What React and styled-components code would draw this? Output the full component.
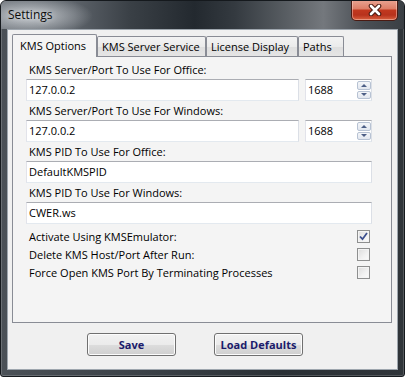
import React from 'react';
import styled, { createGlobalStyle } from 'styled-components';

const GlobalStyle = createGlobalStyle`
  html, body { margin: 0; padding: 0; background: #ffffff; }
  body { font-family: "Open Sans", "DejaVu Sans", sans-serif; }
`;

const Window = styled.div`
  box-sizing: border-box;
  width: 405px;
  height: 377px;
  display: flex;
  flex-direction: column;
  padding: 0 6px 6px;
  border: 1px solid #15191d;
  border-radius: 6px 6px 3px 3px;
  background: linear-gradient(90deg, #4b5157 0%, #393f45 40%, #2a3035 70%, #30353a 100%);
  box-shadow: inset 0 0 0 1px rgba(255, 255, 255, 0.18);
  overflow: hidden;
`;

const TitleBar = styled.div`
  display: flex;
  align-items: flex-start;
  justify-content: space-between;
  height: 28px;
  margin: 0 -6px;
  padding: 0 6px 0 7px;
  background:
    radial-gradient(ellipse 62px 20px at 30px 15px, rgba(225, 229, 233, 0.8), rgba(225, 229, 233, 0) 100%),
    linear-gradient(90deg, #6c7279 0%, #5d636a 18%, #3a4046 32%, #23292f 48%, #343a40 58%, #5c6166 72%, #74787d 80%, #4a4f55 90%, #3a3f44 100%);
`;

const Title = styled.span`
  font-size: 12px;
  line-height: 28px;
  color: #0d0d0d;
  text-shadow: 0 0 6px rgba(255, 255, 255, 0.6);
`;

const CloseButton = styled.div`
  box-sizing: border-box;
  width: 47px;
  height: 21px;
  margin-top: -1px;
  display: flex;
  align-items: center;
  justify-content: center;
  border: 1px solid #4a1a12;
  border-top: none;
  border-radius: 0 0 5px 5px;
  background: linear-gradient(180deg, #e9a493 0%, #dd7d66 45%, #c2381f 50%, #b8321c 75%, #d9603f 100%);
  box-shadow: inset 0 0 0 1px rgba(255, 220, 210, 0.45);
`;

const Client = styled.div`
  flex: 1;
  display: flex;
  flex-direction: column;
  padding: 4px 5px 0 4px;
  background: #f0f0f0;
  border: 1px solid #9ea6ae;
`;

const TabStrip = styled.div`
  display: flex;
  align-items: flex-end;
  height: 23px;
  margin-bottom: -1px;
  position: relative;
  z-index: 1;
`;

const Tab = styled.div`
  box-sizing: border-box;
  width: ${(p) => p.$w}px;
  height: ${(p) => (p.$active ? 23 : 20)}px;
  margin-bottom: ${(p) => (p.$active ? 0 : 1)}px;
  padding-left: ${(p) => (p.$active ? 7 : 4)}px;
  border: 1px solid #898c95;
  border-bottom: none;
  border-radius: 2px 2px 0 0;
  background: ${(p) => (p.$active ? '#f4f4f4' : 'linear-gradient(180deg, #f3f3f3 0%, #ebebeb 50%, #dedede 51%, #e5e5e5 100%)')};
  font-size: 11px;
  line-height: ${(p) => (p.$active ? 22 : 19)}px;
  color: #000;
  white-space: nowrap;
`;

const Panel = styled.div`
  flex: 1;
  display: flex;
  flex-direction: column;
  padding: 4px 19px 0 13px;
  background: #f4f4f4;
  border: 1px solid #898c95;
`;

const FieldLabel = styled.div`
  height: 18px;
  padding-left: 3px;
  font-size: 11px;
  line-height: 17px;
  color: #000;
`;

const FieldRow = styled.div`
  display: flex;
  gap: 6px;
  margin-bottom: 1px;
`;

const TextBox = styled.div`
  box-sizing: border-box;
  position: relative;
  width: ${(p) => (p.$w ? `${p.$w}px` : '100%')};
  height: 22px;
  padding-left: 2px;
  border: 1px solid;
  border-color: #abadb3 #dbdfe6 #e3e9ef #e2e3ea;
  background: #ffffff;
  font-size: 11px;
  line-height: 20px;
  color: #000;
`;

const Spinner = styled.div`
  position: absolute;
  top: 1px;
  right: 0;
  width: 14px;
  height: 18px;
  display: flex;
  flex-direction: column;
  gap: 1px;
`;

const SpinHalf = styled.div`
  flex: 1;
  display: flex;
  align-items: center;
  justify-content: center;
  border: 1px solid #b7c2d3;
  border-radius: 2px;
  background: linear-gradient(180deg, #f4f6f9 0%, #e2e7ef 100%);
`;

const Arrow = styled.div`
  width: 0;
  height: 0;
  border-left: 3px solid transparent;
  border-right: 3px solid transparent;
  ${(p) => (p.$up ? 'border-bottom: 3px solid #4d5f86;' : 'border-top: 3px solid #4d5f86;')}
`;

const CheckList = styled.div`
  display: flex;
  flex-direction: column;
  padding-top: 2px;
`;

const CheckRow = styled.div`
  display: flex;
  align-items: center;
  justify-content: space-between;
  height: 18px;
  padding: 0 2px 0 3px;
  font-size: 11px;
  color: #000;
`;

const Box = styled.div`
  box-sizing: border-box;
  width: 13px;
  height: 13px;
  display: flex;
  align-items: center;
  justify-content: center;
  border: 1px solid #8e8f8f;
  background: linear-gradient(135deg, #dcdcdc 0%, #f2f2f2 60%, #fbfbfb 100%);
  box-shadow: inset 0 0 0 1px #f4f4f4;
`;

const ButtonRow = styled.div`
  display: flex;
  gap: 38px;
  padding: 10px 0 13px 75px;
`;

const Button = styled.div`
  box-sizing: border-box;
  width: 89px;
  height: 23px;
  display: flex;
  align-items: center;
  justify-content: center;
  border: 1px solid #707070;
  border-radius: 3px;
  background: linear-gradient(180deg, #f2f2f2 0%, #ebebeb 50%, #dddddd 51%, #cfcfcf 100%);
  box-shadow: inset 0 0 0 1px #fcfcfc;
  font-size: 11px;
  font-weight: 700;
  color: #1b1b6b;
`;

function CloseGlyph() {
  return (
    <svg width="14" height="12" viewBox="0 0 14 12">
      <path d="M3 2 L11 10 M11 2 L3 10" stroke="#4a1b12" strokeWidth="4.6" strokeLinecap="round" />
      <path d="M3 2 L11 10 M11 2 L3 10" stroke="#ffffff" strokeWidth="2.6" strokeLinecap="round" />
    </svg>
  );
}

function CheckMark() {
  return (
    <svg width="9" height="9" viewBox="0 0 9 9">
      <path d="M1 4.5 L3.5 7.2 L8 1" fill="none" stroke="#3c4f8e" strokeWidth="1.8" />
    </svg>
  );
}

function PortBox({ value }) {
  return (
    <TextBox $w={67}>
      {value}
      <Spinner>
        <SpinHalf><Arrow $up /></SpinHalf>
        <SpinHalf><Arrow /></SpinHalf>
      </Spinner>
    </TextBox>
  );
}

const tabs = [
  { label: 'KMS Options', w: 85, active: true },
  { label: 'KMS Server Service', w: 109 },
  { label: 'License Display', w: 92 },
  { label: 'Paths', w: 46 },
];

const checks = [
  { label: 'Activate Using KMSEmulator:', on: true },
  { label: 'Delete KMS Host/Port After Run:', on: false },
  { label: 'Force Open KMS Port By Terminating Processes', on: false },
];

export default function App() {
  return (
    <>
      <GlobalStyle />
      <Window>
        <TitleBar>
          <Title>Settings</Title>
          <CloseButton><CloseGlyph /></CloseButton>
        </TitleBar>
        <Client>
          <TabStrip>
            {tabs.map((t) => (
              <Tab key={t.label} $w={t.w} $active={t.active}>{t.label}</Tab>
            ))}
          </TabStrip>
          <Panel>
            <FieldLabel>KMS Server/Port To Use For Office:</FieldLabel>
            <FieldRow>
              <TextBox $w={273}>127.0.0.2</TextBox>
              <PortBox value="1688" />
            </FieldRow>
            <FieldLabel>KMS Server/Port To Use For Windows:</FieldLabel>
            <FieldRow>
              <TextBox $w={273}>127.0.0.2</TextBox>
              <PortBox value="1688" />
            </FieldRow>
            <FieldLabel>KMS PID To Use For Office:</FieldLabel>
            <FieldRow>
              <TextBox>DefaultKMSPID</TextBox>
            </FieldRow>
            <FieldLabel>KMS PID To Use For Windows:</FieldLabel>
            <FieldRow>
              <TextBox>CWER.ws</TextBox>
            </FieldRow>
            <CheckList>
              {checks.map((c) => (
                <CheckRow key={c.label}>
                  {c.label}
                  <Box>{c.on && <CheckMark />}</Box>
                </CheckRow>
              ))}
            </CheckList>
          </Panel>
          <ButtonRow>
            <Button>Save</Button>
            <Button>Load Defaults</Button>
          </ButtonRow>
        </Client>
      </Window>
    </>
  );
}
